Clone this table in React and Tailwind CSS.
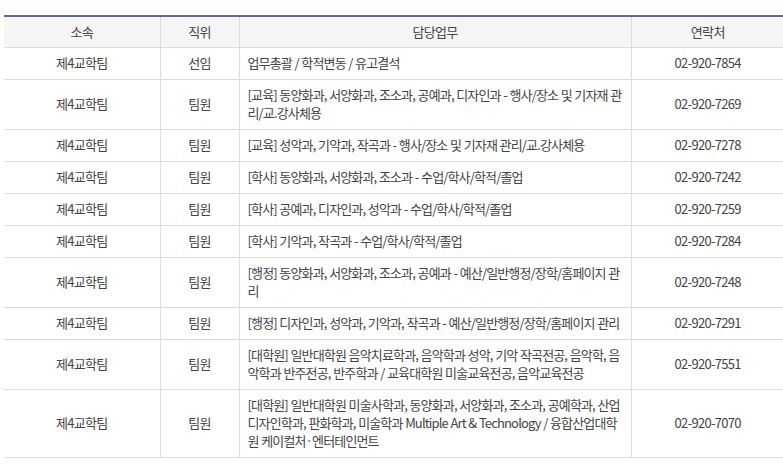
import React from "react";

const rows = [
  { team: "제4교학팀", role: "선임", duty: "업무총괄 / 학적변동 / 유고결석", tel: "02-920-7854" },
  { team: "제4교학팀", role: "팀원", duty: "[교육] 동양화과, 서양화과, 조소과, 공예과, 디자인과 - 행사/장소 및 기자재 관리/교.강사체용", tel: "02-920-7269" },
  { team: "제4교학팀", role: "팀원", duty: "[교육] 성악과, 기악과, 작곡과 - 행사/장소 및 기자재 관리/교.강사체용", tel: "02-920-7278" },
  { team: "제4교학팀", role: "팀원", duty: "[학사] 동양화과, 서양화과, 조소과 - 수업/학사/학적/졸업", tel: "02-920-7242" },
  { team: "제4교학팀", role: "팀원", duty: "[학사] 공예과, 디자인과, 성악과 - 수업/학사/학적/졸업", tel: "02-920-7259" },
  { team: "제4교학팀", role: "팀원", duty: "[학사] 기악과, 작곡과 - 수업/학사/학적/졸업", tel: "02-920-7284" },
  { team: "제4교학팀", role: "팀원", duty: "[행정] 동양화과, 서양화과, 조소과, 공예과 - 예산/일반행정/장학/홈페이지 관리", tel: "02-920-7248" },
  { team: "제4교학팀", role: "팀원", duty: "[행정] 디자인과, 성악과, 기악과, 작곡과 - 예산/일반행정/장학/홈페이지 관리", tel: "02-920-7291" },
  { team: "제4교학팀", role: "팀원", duty: "[대학원] 일반대학원 음악치료학과, 음악학과 성악, 기악 작곡전공, 음악학, 음악학과 반주전공, 반주학과 / 교육대학원 미술교육전공, 음악교육전공", tel: "02-920-7551" },
  { team: "제4교학팀", role: "팀원", duty: "[대학원] 일반대학원 미술사학과, 동양화과, 서양화과, 조소과, 공예학과, 산업디자인학과, 판화학과, 미술학과 Multiple Art & Technology / 융합산업대학원 케이컬처·엔터테인먼트", tel: "02-920-7070" },
];

export default function App() {
  return (
    <div className="bg-white min-h-screen pt-[15px] pl-[4px] overflow-hidden" style={{ fontFamily: '"Noto Sans CJK KR", "Noto Sans", sans-serif' }}>
      <table className="w-[780px] border-collapse table-fixed text-[13px] tracking-[-0.7px] text-[#444] border-t-2 border-t-[#6363a8]">
        <colgroup>
          <col className="w-[156px]" />
          <col className="w-[79px]" />
          <col className="w-[392px]" />
          <col className="w-[153px]" />
        </colgroup>
        <thead>
          <tr className="bg-[#f5f5f5] h-[31px]">
            <th className="font-normal border-b border-[#ddd] leading-[18px]">소속</th>
            <th className="font-normal border-b border-l border-[#ddd] leading-[18px]">직위</th>
            <th className="font-normal border-b border-l border-[#ddd] leading-[18px]">담당업무</th>
            <th className="font-normal border-b border-l border-[#ddd] leading-[18px]">연락처</th>
          </tr>
        </thead>
        <tbody>
          {rows.map((r, i) => (
            <tr key={i}>
              <td className="text-center border-b border-[#ddd] py-[6.5px] leading-[18px]">{r.team}</td>
              <td className="text-center border-b border-l border-[#ddd] py-[6.5px] leading-[18px]">{r.role}</td>
              <td className="text-left border-b border-l border-[#ddd] py-[6.5px] pl-[8px] pr-[7px] leading-[18px] tracking-[-0.85px] [word-spacing:0.5px]">{r.duty}</td>
              <td className="text-center border-b border-l border-[#ddd] py-[6.5px] leading-[18px]">{r.tel}</td>
            </tr>
          ))}
        </tbody>
      </table>
    </div>
  );
}
